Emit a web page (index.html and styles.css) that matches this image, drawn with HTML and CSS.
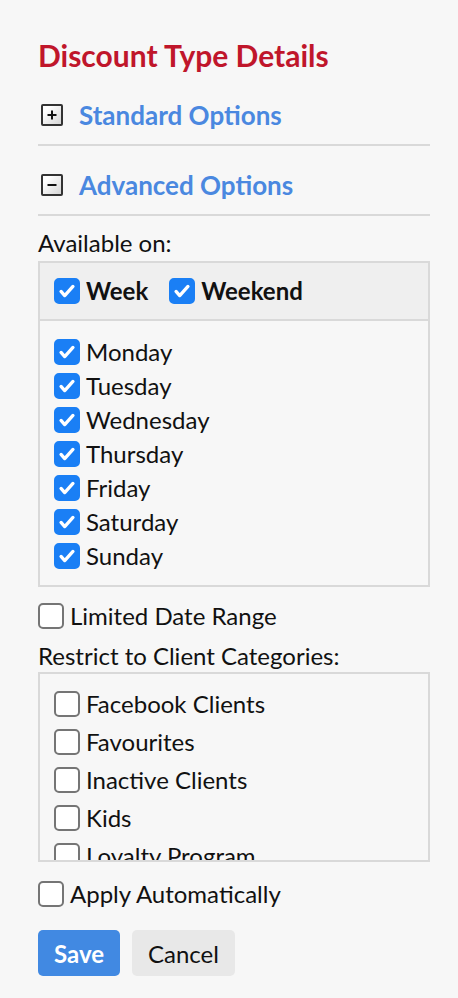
FILE: index.html
```html
<!DOCTYPE html>
<html lang="en">
<head>
    <meta charset="UTF-8">
    <meta name="viewport" content="width=device-width, initial-scale=1.0">
    <title>Discount Type Details</title>
    <link rel="stylesheet" href="styles.css">
</head>
<body>

    <div class="page">
        <h1>Discount Type Details</h1>

        <div class="section first">
            <span class="toggle"><svg viewBox="0 0 18 18"><path d="M4.5 9h9M9 4.5v9"/></svg></span>
            <span class="section-title">Standard Options</span>
        </div>
        <div class="section">
            <span class="toggle"><svg viewBox="0 0 18 18"><path d="M4.5 9h9"/></svg></span>
            <span class="section-title">Advanced Options</span>
        </div>

        <div class="label">Available on:</div>
        <div class="days">
            <div class="days-head">
                <label class="check bold"><span class="box on"><svg viewBox="0 0 24 24"><path d="M5.5 12.5l4 4.5L18.5 7"/></svg></span>Week</label>
                <label class="check bold"><span class="box on"><svg viewBox="0 0 24 24"><path d="M5.5 12.5l4 4.5L18.5 7"/></svg></span>Weekend</label>
            </div>
            <div class="days-list">
                <label class="check"><span class="box on"><svg viewBox="0 0 24 24"><path d="M5.5 12.5l4 4.5L18.5 7"/></svg></span>Monday</label>
                <label class="check"><span class="box on"><svg viewBox="0 0 24 24"><path d="M5.5 12.5l4 4.5L18.5 7"/></svg></span>Tuesday</label>
                <label class="check"><span class="box on"><svg viewBox="0 0 24 24"><path d="M5.5 12.5l4 4.5L18.5 7"/></svg></span>Wednesday</label>
                <label class="check"><span class="box on"><svg viewBox="0 0 24 24"><path d="M5.5 12.5l4 4.5L18.5 7"/></svg></span>Thursday</label>
                <label class="check"><span class="box on"><svg viewBox="0 0 24 24"><path d="M5.5 12.5l4 4.5L18.5 7"/></svg></span>Friday</label>
                <label class="check"><span class="box on"><svg viewBox="0 0 24 24"><path d="M5.5 12.5l4 4.5L18.5 7"/></svg></span>Saturday</label>
                <label class="check"><span class="box on"><svg viewBox="0 0 24 24"><path d="M5.5 12.5l4 4.5L18.5 7"/></svg></span>Sunday</label>
            </div>
        </div>

        <label class="check single date-range"><span class="box"></span>Limited Date Range</label>

        <div class="label restrict">Restrict to Client Categories:</div>
        <div class="categories">
            <label class="check"><span class="box"></span>Facebook Clients</label>
            <label class="check"><span class="box"></span>Favourites</label>
            <label class="check"><span class="box"></span>Inactive Clients</label>
            <label class="check"><span class="box"></span>Kids</label>
            <label class="check"><span class="box"></span>Loyalty Program</label>
        </div>

        <label class="check single auto"><span class="box"></span>Apply Automatically</label>

        <div class="actions">
            <button class="btn save">Save</button>
            <button class="btn cancel">Cancel</button>
        </div>
    </div>

</body>
</html>
```

FILE: styles.css
```css
body {
    font-family: 'Lato', 'Liberation Sans', sans-serif;
    background-color: #f7f7f7;
    color: #111;
    margin: 0;
}
.page {
    padding: 38px 28px 0 38px;
}
h1 {
    color: #c0162b;
    font-size: 30px;
    font-weight: 700;
    margin: 0;
    line-height: 34px;
}
.section {
    display: flex;
    align-items: flex-end;
    gap: 16px;
    height: 70px;
    padding: 0 0 14px 3px;
    border-bottom: 2px solid #d9d9d9;
    box-sizing: border-box;
}
.section.first {
    height: 74px;
}
.toggle {
    width: 18px;
    height: 18px;
    margin-bottom: 4px;
    border: 2px solid #333;
    border-radius: 2px;
    background: linear-gradient(135deg, #fff 20%, #d6d6d6);
    flex-shrink: 0;
}
.toggle svg {
    display: block;
    width: 18px;
    height: 18px;
    stroke: #111;
    stroke-width: 2;
}
.section-title {
    color: #4a88e0;
    font-size: 26px;
    font-weight: 700;
    line-height: 30px;
}
.label {
    font-size: 24px;
    line-height: 28px;
    margin: 13px 0 4px;
}
.days {
    border: 2px solid #d9d9d9;
}
.days-head {
    display: flex;
    gap: 21px;
    background: #efefef;
    border-bottom: 2px solid #d9d9d9;
    padding: 14px 14px;
}
.days-list {
    display: flex;
    flex-direction: column;
    gap: 6px;
    padding: 17px 14px 15px;
}
.check {
    display: flex;
    align-items: center;
    gap: 6px;
    font-size: 24px;
    line-height: 28px;
}
.check.bold {
    font-weight: 700;
}
.box {
    width: 22px;
    height: 22px;
    border: 2px solid #757575;
    border-radius: 5px;
    background: #fff;
    flex-shrink: 0;
    display: flex;
    align-items: center;
    justify-content: center;
}
.box.on {
    background: #1a7ff5;
    border-color: #1a7ff5;
}
.box svg {
    width: 22px;
    height: 22px;
    fill: none;
    stroke: #fff;
    stroke-width: 3.6;
    stroke-linecap: round;
    stroke-linejoin: round;
}
.date-range {
    margin-top: 15px;
}
.label.restrict {
    margin: 12px 0 2px;
}
.categories {
    border: 2px solid #d9d9d9;
    height: 190px;
    box-sizing: border-box;
    overflow: hidden;
    padding: 16px 14px 0;
    display: flex;
    flex-direction: column;
    gap: 10px;
}
.categories .check {
    flex-shrink: 0;
}
.auto {
    margin-top: 18px;
}
.actions {
    display: flex;
    gap: 12px;
    margin-top: 22px;
}
.btn {
    font-family: inherit;
    font-size: 24px;
    border: none;
    border-radius: 5px;
    height: 46px;
    padding: 0 16px;
}
.save {
    background: #4189e2;
    color: #fff;
    font-weight: 700;
}
.cancel {
    background: #e8e8e8;
    color: #111;
}
```
